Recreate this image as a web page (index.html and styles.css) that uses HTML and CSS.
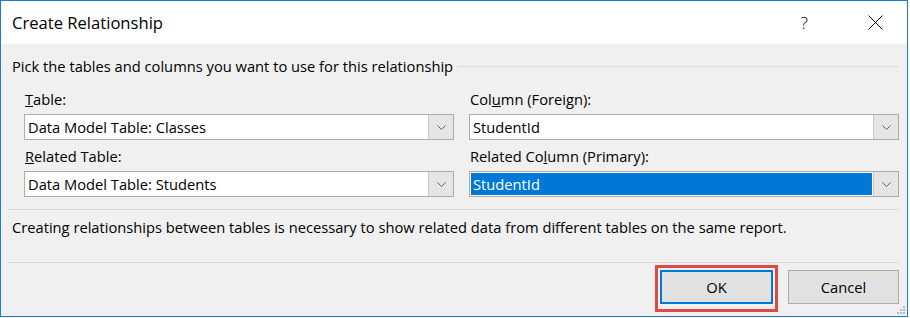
FILE: index.html
```html
<!DOCTYPE html>
<html lang="en">
<head>
  <meta charset="UTF-8" />
  <title>Create Relationship</title>
  <link rel="stylesheet" href="styles.css">
</head>
<body>

<div class="dialog">
  <div class="titlebar">
    <span class="title">Create Relationship</span>
    <span class="help">?</span>
    <svg class="close" width="15" height="15" viewBox="0 0 15 15">
      <path d="M0.5 0.5 L14.5 14.5 M14.5 0.5 L0.5 14.5" stroke="#000" stroke-width="1" fill="none"/>
    </svg>
  </div>

  <div class="content">
    <div class="group-head">
      <span>Pick the tables and columns you want to use for this relationship</span>
      <div class="group-line"></div>
    </div>

    <div class="fields">
      <div class="field">
        <label><u>T</u>able:</label>
        <div class="combo">
          <div class="combo-text">Data Model Table: Classes</div>
          <div class="combo-btn"><svg width="9" height="5" viewBox="0 0 9 5"><path d="M0.5 0.5 L4.5 4.5 L8.5 0.5" stroke="#606060" fill="none"/></svg></div>
        </div>
      </div>
      <div class="field">
        <label>Col<u>u</u>mn (Foreign):</label>
        <div class="combo">
          <div class="combo-text">StudentId</div>
          <div class="combo-btn"><svg width="9" height="5" viewBox="0 0 9 5"><path d="M0.5 0.5 L4.5 4.5 L8.5 0.5" stroke="#606060" fill="none"/></svg></div>
        </div>
      </div>
      <div class="field">
        <label><u>R</u>elated Table:</label>
        <div class="combo">
          <div class="combo-text">Data Model Table: Students</div>
          <div class="combo-btn"><svg width="9" height="5" viewBox="0 0 9 5"><path d="M0.5 0.5 L4.5 4.5 L8.5 0.5" stroke="#606060" fill="none"/></svg></div>
        </div>
      </div>
      <div class="field">
        <label>Related Co<u>l</u>umn (Primary):</label>
        <div class="combo">
          <div class="combo-text"><span class="selected">StudentId</span></div>
          <div class="combo-btn"><svg width="9" height="5" viewBox="0 0 9 5"><path d="M0.5 0.5 L4.5 4.5 L8.5 0.5" stroke="#606060" fill="none"/></svg></div>
        </div>
      </div>
    </div>

    <div class="separator"></div>
    <p class="note">Creating relationships between tables is necessary to show related data from different tables on the same report.</p>
    <div class="separator"></div>

    <div class="buttons">
      <div class="btn-wrap">
        <button class="btn default">OK</button>
        <span class="highlight"></span>
      </div>
      <button class="btn">Cancel</button>
    </div>
  </div>

  <svg class="grip" width="8" height="8" viewBox="0 0 8 8">
    <rect x="6" y="0" width="2" height="2" fill="#b8b8b8"/>
    <rect x="3" y="3" width="2" height="2" fill="#b8b8b8"/>
    <rect x="6" y="3" width="2" height="2" fill="#b8b8b8"/>
    <rect x="0" y="6" width="2" height="2" fill="#b8b8b8"/>
    <rect x="3" y="6" width="2" height="2" fill="#b8b8b8"/>
    <rect x="6" y="6" width="2" height="2" fill="#b8b8b8"/>
  </svg>
</div>

</body>
</html>
```

FILE: styles.css
```css
body {
  margin: 0;
  padding: 0;
  background: #fff;
  font-family: "Open Sans", "Noto Sans", sans-serif;
  font-size: 14.7px;
  color: #000;
}

.dialog {
  position: relative;
  width: 908px;
  height: 317px;
  box-sizing: border-box;
  border: 1px solid #1f7bd0;
  display: flex;
  flex-direction: column;
}

.titlebar {
  height: 43px;
  background: #fff;
  display: flex;
  align-items: center;
  padding-left: 11px;
}

.title {
  font-size: 16.6px;
  flex: 1;
}

.help {
  font-size: 17px;
  font-weight: 300;
  margin-right: 60px;
}

.close {
  margin-right: 24px;
}

.content {
  flex: 1;
  background: #f0f0f0;
  padding: 0 8px 0 7px;
  display: flex;
  flex-direction: column;
}

.group-head {
  display: flex;
  align-items: center;
  height: 20px;
  margin-top: 12px;
  padding-left: 4px;
}

.group-line {
  flex: 1;
  height: 1px;
  background: #dcdcdc;
  margin-left: 4px;
}

.fields {
  display: grid;
  grid-template-columns: 1fr 1fr;
  column-gap: 15px;
  margin-left: 16px;
  margin-top: 13px;
}

.field label {
  display: block;
  height: 20px;
  line-height: 20px;
  padding-left: 1px;
  margin-bottom: 5px;
}

.field u {
  text-decoration-thickness: 1px;
}

.combo {
  display: flex;
  height: 26px;
  box-sizing: border-box;
  border: 1px solid #adadad;
  background: #fff;
  margin-bottom: 6px;
}

.combo-text {
  flex: 1;
  padding: 1px;
  display: flex;
  line-height: 22px;
}

.combo-text:not(:has(.selected)) {
  padding-left: 3px;
}

.selected {
  flex: 1;
  background: #0078d7;
  color: #fff;
  padding-left: 2px;
}

.combo-btn {
  width: 24px;
  background: #e5e5e5;
  border-left: 1px solid #c8c8c8;
  display: flex;
  align-items: center;
  justify-content: center;
}

.separator {
  height: 1px;
  background: #d9d9d9;
  margin-top: 6px;
}

.note {
  margin: 7px 0 0 4px;
  height: 20px;
  line-height: 20px;
}

.separator + .buttons {
  margin-top: 7px;
}

.note + .separator {
  margin-top: 25px;
}

.buttons {
  display: flex;
  justify-content: flex-end;
  gap: 15px;
}

.btn {
  width: 111px;
  height: 34px;
  box-sizing: border-box;
  background: #e1e1e1;
  border: 1px solid #adadad;
  font-family: inherit;
  font-size: 14.7px;
  color: #000;
  padding: 0;
}

.btn.default {
  width: 113px;
  border: 2px solid #0078d7;
}

.btn-wrap {
  position: relative;
  display: flex;
}

.highlight {
  position: absolute;
  left: -5px;
  top: -5px;
  right: -5px;
  bottom: -8px;
  border: 3px solid #dc4a44;
}

.grip {
  position: absolute;
  right: 2px;
  bottom: 2px;
}
```
